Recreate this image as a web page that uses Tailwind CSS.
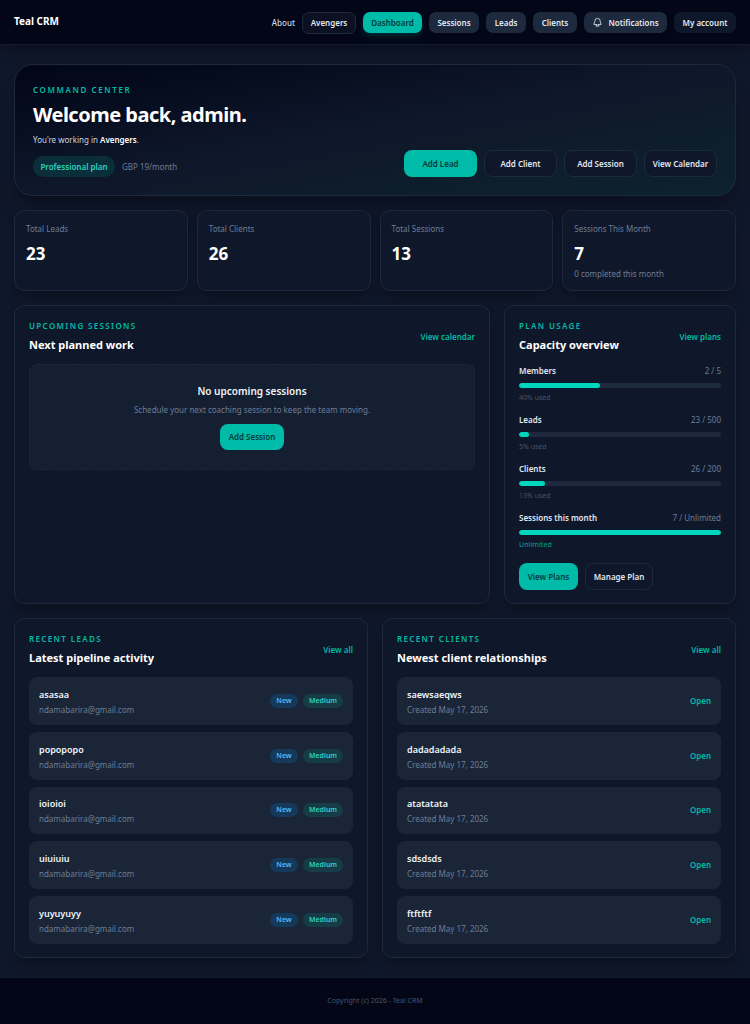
<!DOCTYPE html>
<html lang="en">
<head>
<meta charset="utf-8">
<meta name="viewport" content="width=device-width, initial-scale=1">
<title>Teal CRM</title>
<script src="https://cdn.jsdelivr.net/npm/@tailwindcss/browser@4"></script>
</head>
<body class="flex min-h-screen flex-col bg-[#0f172a] font-['Segoe_UI','Noto_Sans',sans-serif] text-[8px] leading-[12px] text-slate-200">

<header class="border-b border-[#111a2d] bg-[#020617] shadow-lg shadow-black/20">
  <div class="flex h-[44px] items-center justify-between px-[14px] pt-px">
    <a href="#" class="-mt-1 text-[10px] font-bold text-white">Teal CRM</a>
    <nav class="flex items-center gap-[7px] font-semibold">
      <a href="#" class="font-medium text-slate-300">About</a>
      <a href="#" class="flex h-[22px] w-[54px] items-center justify-center rounded-[7px] border border-slate-800 bg-[#0b1022]">Avengers</a>
      <a href="#" class="flex h-[21px] w-[59px] items-center justify-center rounded-[7px] bg-[#00bba7] text-[#023a3c] shadow-md shadow-teal-500/15">Dashboard</a>
      <a href="#" class="flex h-[21px] w-[50px] items-center justify-center rounded-[7px] bg-slate-800">Sessions</a>
      <a href="#" class="flex h-[21px] w-[40px] items-center justify-center rounded-[7px] bg-slate-800">Leads</a>
      <a href="#" class="flex h-[21px] w-[44px] items-center justify-center rounded-[7px] bg-slate-800">Clients</a>
      <button type="button" class="flex h-[21px] w-[83px] items-center justify-center gap-[5px] rounded-[7px] bg-slate-800">
        <svg class="size-[11px]" viewBox="0 0 24 24" fill="none" stroke="currentColor" stroke-width="1.8" stroke-linecap="round" stroke-linejoin="round" aria-hidden="true"><path d="M14.857 17.082a23.848 23.848 0 0 0 5.454-1.31A8.967 8.967 0 0 1 18 9.75V9A6 6 0 0 0 6 9v.75a8.967 8.967 0 0 1-2.312 6.022c1.733.64 3.56 1.085 5.455 1.31m5.714 0a24.255 24.255 0 0 1-5.714 0m5.714 0a3 3 0 1 1-5.714 0"/></svg>
        Notifications
      </button>
      <button type="button" class="h-[21px] w-[62px] rounded-[7px] bg-[#0f172a]">My account</button>
    </nav>
  </div>
</header>

<main class="flex flex-1 flex-col gap-[14px] px-[14px] pt-[19px] pb-[18px]">

  <section class="flex items-end justify-between rounded-[19px] border border-slate-800 bg-linear-to-br from-[#020617] via-[#0f172a] to-[#0b232d] p-[18px] shadow-xl shadow-black/20">
    <div>
      <p class="mt-px font-semibold tracking-[0.2em] text-[#00bba7]">COMMAND CENTER</p>
      <h1 class="mt-[6px] text-[20px] leading-[26px] font-bold tracking-tight text-white">Welcome back, admin.</h1>
      <p class="mt-[6px] text-slate-300">You're working in <strong class="font-semibold text-white">Avengers</strong>.</p>
      <div class="mt-[10px] flex items-center gap-[7px]">
        <span class="flex h-[21px] w-[82px] items-center justify-center rounded-full bg-[#0b2f3a] font-semibold text-[#2dd4bf]">Professional plan</span>
        <span class="text-[#6d7d95]">GBP 19/month</span>
      </div>
    </div>
    <div class="grid grid-cols-4 gap-[7px] font-semibold">
      <button type="button" class="h-[27px] w-[73px] rounded-[8px] bg-[#00bba7] text-[#023a3c]">Add Lead</button>
      <button type="button" class="h-[27px] w-[73px] rounded-[8px] border border-slate-800 bg-[#0f172a]">Add Client</button>
      <button type="button" class="h-[27px] w-[73px] rounded-[8px] border border-slate-800 bg-[#0f172a]">Add Session</button>
      <button type="button" class="h-[27px] w-[73px] rounded-[8px] border border-slate-800 bg-[#0f172a]">View Calendar</button>
    </div>
  </section>

  <section class="grid grid-cols-4 gap-[9px]">
    <article class="rounded-[10px] border border-slate-800 bg-[#0f172a] px-[11px] pt-[12px] pb-[10px] shadow-lg shadow-black/20">
      <p class="text-[#6d7d95]">Total Leads</p>
      <p class="mt-[8px] text-[17px] leading-[22px] font-bold text-white">23</p>
    </article>
    <article class="rounded-[10px] border border-slate-800 bg-[#0f172a] px-[11px] pt-[12px] pb-[10px] shadow-lg shadow-black/20">
      <p class="text-[#6d7d95]">Total Clients</p>
      <p class="mt-[8px] text-[17px] leading-[22px] font-bold text-white">26</p>
    </article>
    <article class="rounded-[10px] border border-slate-800 bg-[#0f172a] px-[11px] pt-[12px] pb-[10px] shadow-lg shadow-black/20">
      <p class="text-[#6d7d95]">Total Sessions</p>
      <p class="mt-[8px] text-[17px] leading-[22px] font-bold text-white">13</p>
    </article>
    <article class="rounded-[10px] border border-slate-800 bg-[#0f172a] px-[11px] pt-[12px] pb-[10px] shadow-lg shadow-black/20">
      <p class="text-[#6d7d95]">Sessions This Month</p>
      <p class="mt-[8px] text-[17px] leading-[22px] font-bold text-white">7</p>
      <p class="mt-[3px] text-[#6d7d95]">0 completed this month</p>
    </article>
  </section>

  <section class="grid grid-cols-[476fr_232fr] gap-[14px]">
    <article class="rounded-[10px] border border-slate-800 bg-[#0f172a] px-[14px] pt-[14px] pb-[13px] shadow-lg shadow-black/20">
      <div class="flex items-center justify-between">
        <div>
          <p class="font-semibold tracking-[0.17em] text-[#00bba7]">UPCOMING SESSIONS</p>
          <h2 class="mt-[5px] text-[11px] leading-[16px] font-bold text-white">Next planned work</h2>
        </div>
        <a href="#" class="font-semibold text-[#00bba7]">View calendar</a>
      </div>
      <div class="mt-[11px] flex h-[106px] flex-col items-center justify-center rounded-[8px] border border-dashed border-slate-800 bg-[#151f32]">
        <h3 class="text-[10px] leading-[14px] font-semibold text-slate-100">No upcoming sessions</h3>
        <p class="mt-[6px] text-[#6d7d95]">Schedule your next coaching session to keep the team moving.</p>
        <button type="button" class="mt-[8px] h-[26px] w-[64px] rounded-[8px] bg-[#00bba7] font-semibold text-[#023a3c]">Add Session</button>
      </div>
    </article>

    <article class="rounded-[10px] border border-slate-800 bg-[#0f172a] px-[14px] pt-[14px] pb-[13px] shadow-lg shadow-black/20">
      <div class="flex items-center justify-between">
        <div>
          <p class="font-semibold tracking-[0.17em] text-[#00bba7]">PLAN USAGE</p>
          <h2 class="mt-[5px] text-[11px] leading-[16px] font-bold text-white">Capacity overview</h2>
        </div>
        <a href="#" class="font-semibold text-[#00bba7]">View plans</a>
      </div>
      <div class="mt-[12px] flex flex-col gap-[11px]">
        <div>
          <div class="flex justify-between"><span class="font-semibold">Members</span><span class="text-[#6d7d95]">2 / 5</span></div>
          <div class="mt-[6px] h-[5px] overflow-hidden rounded-full bg-slate-800"><div class="h-full rounded-full bg-[#00d5be]" style="width:40%"></div></div>
          <p class="mt-[5px] text-[7px] leading-[10px] text-slate-600">40% used</p>
        </div>
        <div>
          <div class="flex justify-between"><span class="font-semibold">Leads</span><span class="text-[#6d7d95]">23 / 500</span></div>
          <div class="mt-[6px] h-[5px] overflow-hidden rounded-full bg-slate-800"><div class="h-full rounded-full bg-[#00d5be]" style="width:5%"></div></div>
          <p class="mt-[5px] text-[7px] leading-[10px] text-slate-600">5% used</p>
        </div>
        <div>
          <div class="flex justify-between"><span class="font-semibold">Clients</span><span class="text-[#6d7d95]">26 / 200</span></div>
          <div class="mt-[6px] h-[5px] overflow-hidden rounded-full bg-slate-800"><div class="h-full rounded-full bg-[#00d5be]" style="width:13%"></div></div>
          <p class="mt-[5px] text-[7px] leading-[10px] text-slate-600">13% used</p>
        </div>
        <div>
          <div class="flex justify-between"><span class="font-semibold">Sessions this month</span><span class="text-[#6d7d95]">7 / Unlimited</span></div>
          <div class="mt-[6px] h-[5px] overflow-hidden rounded-full bg-slate-800"><div class="h-full rounded-full bg-[#00d5be]" style="width:100%"></div></div>
          <p class="mt-[5px] text-[7px] leading-[10px] font-medium text-[#009689]">Unlimited</p>
        </div>
      </div>
      <div class="mt-[13px] flex gap-[7px] font-semibold">
        <button type="button" class="h-[27px] w-[59px] rounded-[8px] bg-[#00bba7] text-[#023a3c]">View Plans</button>
        <button type="button" class="h-[27px] w-[68px] rounded-[8px] border border-slate-800">Manage Plan</button>
      </div>
    </article>
  </section>

  <section class="grid grid-cols-2 gap-[14px]">
    <article class="rounded-[10px] border border-slate-800 bg-[#0f172a] px-[14px] pt-[14px] pb-[13px] shadow-lg shadow-black/20">
      <div class="flex items-center justify-between">
        <div>
          <p class="font-semibold tracking-[0.17em] text-[#00bba7]">RECENT LEADS</p>
          <h2 class="mt-[5px] text-[11px] leading-[16px] font-bold text-white">Latest pipeline activity</h2>
        </div>
        <a href="#" class="font-semibold text-[#00bba7]">View all</a>
      </div>
      <ul class="mt-[11px] flex min-h-[267px] flex-col gap-[7px]">
        <li class="flex flex-1 items-center justify-between rounded-[8px] bg-[#1a2538] px-[10px]">
          <div class="pt-[3px]"><p class="text-[9px] font-semibold text-slate-100">asasaa</p><p class="mt-[3px] text-[#6d7d95]">ndamabarira@gmail.com</p></div>
          <div class="flex gap-[5px] text-[7px] font-semibold"><span class="flex h-[14px] w-[28px] items-center justify-center rounded-full bg-[#15395a] text-[#5bb8f0]">New</span><span class="flex h-[14px] w-[40px] items-center justify-center rounded-full bg-[#163c48] text-[#2dd4bf]">Medium</span></div>
        </li>
        <li class="flex flex-1 items-center justify-between rounded-[8px] bg-[#1a2538] px-[10px]">
          <div class="pt-[3px]"><p class="text-[9px] font-semibold text-slate-100">popopopo</p><p class="mt-[3px] text-[#6d7d95]">ndamabarira@gmail.com</p></div>
          <div class="flex gap-[5px] text-[7px] font-semibold"><span class="flex h-[14px] w-[28px] items-center justify-center rounded-full bg-[#15395a] text-[#5bb8f0]">New</span><span class="flex h-[14px] w-[40px] items-center justify-center rounded-full bg-[#163c48] text-[#2dd4bf]">Medium</span></div>
        </li>
        <li class="flex flex-1 items-center justify-between rounded-[8px] bg-[#1a2538] px-[10px]">
          <div class="pt-[3px]"><p class="text-[9px] font-semibold text-slate-100">ioioioi</p><p class="mt-[3px] text-[#6d7d95]">ndamabarira@gmail.com</p></div>
          <div class="flex gap-[5px] text-[7px] font-semibold"><span class="flex h-[14px] w-[28px] items-center justify-center rounded-full bg-[#15395a] text-[#5bb8f0]">New</span><span class="flex h-[14px] w-[40px] items-center justify-center rounded-full bg-[#163c48] text-[#2dd4bf]">Medium</span></div>
        </li>
        <li class="flex flex-1 items-center justify-between rounded-[8px] bg-[#1a2538] px-[10px]">
          <div class="pt-[3px]"><p class="text-[9px] font-semibold text-slate-100">uiuiuiu</p><p class="mt-[3px] text-[#6d7d95]">ndamabarira@gmail.com</p></div>
          <div class="flex gap-[5px] text-[7px] font-semibold"><span class="flex h-[14px] w-[28px] items-center justify-center rounded-full bg-[#15395a] text-[#5bb8f0]">New</span><span class="flex h-[14px] w-[40px] items-center justify-center rounded-full bg-[#163c48] text-[#2dd4bf]">Medium</span></div>
        </li>
        <li class="flex flex-1 items-center justify-between rounded-[8px] bg-[#1a2538] px-[10px]">
          <div class="pt-[3px]"><p class="text-[9px] font-semibold text-slate-100">yuyuyuyy</p><p class="mt-[3px] text-[#6d7d95]">ndamabarira@gmail.com</p></div>
          <div class="flex gap-[5px] text-[7px] font-semibold"><span class="flex h-[14px] w-[28px] items-center justify-center rounded-full bg-[#15395a] text-[#5bb8f0]">New</span><span class="flex h-[14px] w-[40px] items-center justify-center rounded-full bg-[#163c48] text-[#2dd4bf]">Medium</span></div>
        </li>
      </ul>
    </article>

    <article class="rounded-[10px] border border-slate-800 bg-[#0f172a] px-[14px] pt-[14px] pb-[13px] shadow-lg shadow-black/20">
      <div class="flex items-center justify-between">
        <div>
          <p class="font-semibold tracking-[0.17em] text-[#00bba7]">RECENT CLIENTS</p>
          <h2 class="mt-[5px] text-[11px] leading-[16px] font-bold text-white">Newest client relationships</h2>
        </div>
        <a href="#" class="font-semibold text-[#00bba7]">View all</a>
      </div>
      <ul class="mt-[11px] flex min-h-[267px] flex-col gap-[7px]">
        <li class="flex flex-1 items-center justify-between rounded-[8px] bg-[#1a2538] px-[10px]">
          <div class="pt-[3px]"><p class="text-[9px] font-semibold text-slate-100">saewsaeqws</p><p class="mt-[3px] text-[#6d7d95]">Created May 17, 2026</p></div>
          <a href="#" class="font-semibold text-[#00bba7]">Open</a>
        </li>
        <li class="flex flex-1 items-center justify-between rounded-[8px] bg-[#1a2538] px-[10px]">
          <div class="pt-[3px]"><p class="text-[9px] font-semibold text-slate-100">dadadadada</p><p class="mt-[3px] text-[#6d7d95]">Created May 17, 2026</p></div>
          <a href="#" class="font-semibold text-[#00bba7]">Open</a>
        </li>
        <li class="flex flex-1 items-center justify-between rounded-[8px] bg-[#1a2538] px-[10px]">
          <div class="pt-[3px]"><p class="text-[9px] font-semibold text-slate-100">atatatata</p><p class="mt-[3px] text-[#6d7d95]">Created May 17, 2026</p></div>
          <a href="#" class="font-semibold text-[#00bba7]">Open</a>
        </li>
        <li class="flex flex-1 items-center justify-between rounded-[8px] bg-[#1a2538] px-[10px]">
          <div class="pt-[3px]"><p class="text-[9px] font-semibold text-slate-100">sdsdsds</p><p class="mt-[3px] text-[#6d7d95]">Created May 17, 2026</p></div>
          <a href="#" class="font-semibold text-[#00bba7]">Open</a>
        </li>
        <li class="flex flex-1 items-center justify-between rounded-[8px] bg-[#1a2538] px-[10px]">
          <div class="pt-[3px]"><p class="text-[9px] font-semibold text-slate-100">ftftftf</p><p class="mt-[3px] text-[#6d7d95]">Created May 17, 2026</p></div>
          <a href="#" class="font-semibold text-[#00bba7]">Open</a>
        </li>
      </ul>
    </article>
  </section>
</main>

<footer class="border-t border-[#111a2d] bg-[#020617] py-[17px] text-center text-[7px] text-slate-600">Copyright (c) 2026 - Teal CRM</footer>
</body>
</html>
